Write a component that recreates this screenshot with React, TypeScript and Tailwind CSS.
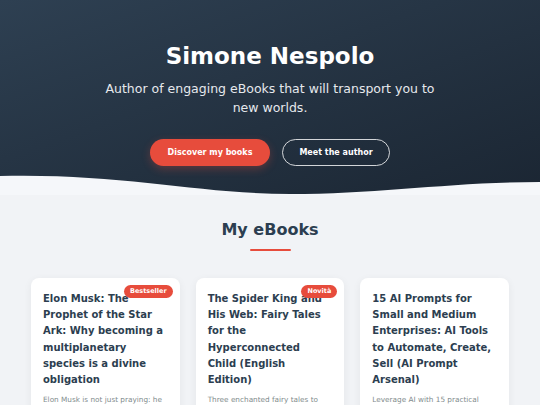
import React from 'react';

type Book = {
  title: string;
  blurb: string;
  badge?: string;
};

const books: Book[] = [
  {
    title: 'Elon Musk: The Prophet of the Star Ark: Why becoming a multiplanetary species is a divine obligation',
    blurb: 'Elon Musk is not just praying: he is building the ark for the stars.',
    badge: 'Bestseller',
  },
  {
    title: 'The Spider King and His Web: Fairy Tales for the Hyperconnected Child (English Edition)',
    blurb: 'Three enchanted fairy tales to help children understand the web.',
    badge: 'Novità',
  },
  {
    title: '15 AI Prompts for Small and Medium Enterprises: AI Tools to Automate, Create, Sell (AI Prompt Arsenal)',
    blurb: 'Leverage AI with 15 practical prompts for your business.',
  },
];

function BookCard({ book }: { book: Book }) {
  return (
    <div className="relative rounded-[8px] bg-white pl-[12px] pr-[15px] pt-[13px] pb-4 shadow-[0_2px_8px_rgba(0,0,0,0.06)]">
      {book.badge && (
        <span className="absolute right-[7px] top-[7px] rounded-full bg-[#e74c3c] px-[6px] py-[2px] text-[6.5px] font-bold leading-[9px] text-white">
          {book.badge}
        </span>
      )}
      <h3 className="text-[10px] font-bold leading-[16.2px] text-[#2c3e50]">{book.title}</h3>
      <p className="mt-[6px] -mr-[3px] text-[7.3px] leading-[11px] text-[#7f8c8d]">{book.blurb}</p>
    </div>
  );
}

export default function App() {
  return (
    <div className="min-h-screen bg-[#f1f3f6] font-['DejaVu_Sans',sans-serif]">
      {/* hero */}
      <header className="relative h-[195px] bg-gradient-to-br from-[#2e4052] to-[#1b2633] pt-[41px] text-center text-white">
        <h1 className="text-[23px] font-bold leading-[30px]">Simone Nespolo</h1>
        <p className="mx-auto mt-[8px] max-w-[340px] text-[12.5px] leading-[19px] text-[#e6e9ed]">
          Author of engaging eBooks that will transport you to new worlds.
        </p>
        <div className="mt-[22px] flex justify-center gap-[12px]">
          <button className="h-[27px] w-[120px] rounded-full bg-[#e74c3c] text-[8px] font-bold text-white shadow-[0_3px_8px_rgba(231,76,60,0.3)]">
            Discover my books
          </button>
          <button className="h-[27px] w-[108px] rounded-full border border-white/80 text-[8px] font-bold text-white">
            Meet the author
          </button>
        </div>
        <svg
          className="absolute bottom-0 left-0 h-[25px] w-full"
          viewBox="0 0 540 25"
          preserveAspectRatio="none"
        >
          <path d="M0,6 C120,3 200,24 290,24 C380,24 450,12 540,12 L540,25 L0,25 Z" fill="#f5f7fa" />
        </svg>
      </header>

      {/* books */}
      <section className="px-[31px] pt-[23px]">
        <h2 className="text-center text-[16px] font-bold leading-[24px] text-[#2c3e50]">My eBooks</h2>
        <div className="mx-auto mt-[7px] h-[2px] w-[41px] rounded bg-[#e74c3c]" />
        <div className="mt-[27px] grid grid-cols-3 gap-[16px]">
          {books.map((b) => (
            <BookCard key={b.title} book={b} />
          ))}
        </div>
      </section>
    </div>
  );
}
